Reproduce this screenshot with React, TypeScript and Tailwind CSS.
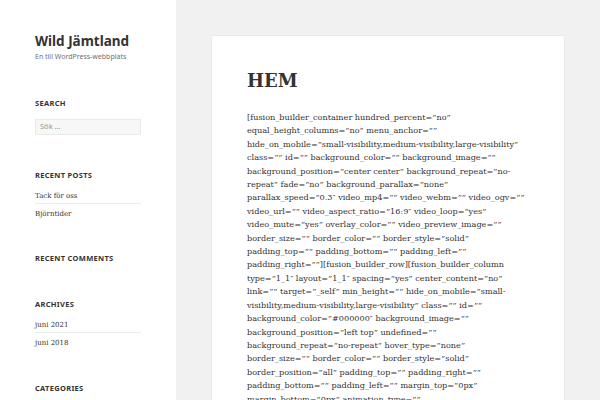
import React from "react";

const lines = [
  "[fusion_builder_container hundred_percent=”no”",
  "equal_height_columns=”no” menu_anchor=””",
  "hide_on_mobile=”small-visibility,medium-visibility,large-visibility”",
  "class=”” id=”” background_color=”” background_image=””",
  "background_position=”center center” background_repeat=”no-",
  "repeat” fade=”no” background_parallax=”none”",
  "parallax_speed=”0.3″ video_mp4=”” video_webm=”” video_ogv=””",
  "video_url=”” video_aspect_ratio=”16:9″ video_loop=”yes”",
  "video_mute=”yes” overlay_color=”” video_preview_image=””",
  "border_size=”” border_color=”” border_style=”solid”",
  "padding_top=”” padding_bottom=”” padding_left=””",
  "padding_right=””][fusion_builder_row][fusion_builder_column",
  "type=”1_1″ layout=”1_1″ spacing=”yes” center_content=”no”",
  "link=”” target=”_self” min_height=”” hide_on_mobile=”small-",
  "visibility,medium-visibility,large-visibility” class=”” id=””",
  "background_color=”#000000″ background_image=””",
  "background_position=”left top” undefined=””",
  "background_repeat=”no-repeat” hover_type=”none”",
  "border_size=”” border_color=”” border_style=”solid”",
  "border_position=”all” padding_top=”” padding_right=””",
  "padding_bottom=”” padding_left=”” margin_top=”0px”",
  "margin_bottom=”0px” animation_type=””",
];

const sans = "font-['Noto_Sans',sans-serif]";

function WidgetTitle({ children, className = "" }: { children: React.ReactNode; className?: string }) {
  return (
    <h2
      className={`font-['Noto_Sans',sans-serif] font-bold uppercase text-[7.5px] leading-[12px] tracking-[0.3px] text-[#333] ${className}`}
    >
      {children}
    </h2>
  );
}

function ListItem({ children, last = false }: { children: React.ReactNode; last?: boolean }) {
  return (
    <li
      className={`h-[18px] pt-[4px] font-['DejaVu_Serif',serif] text-[7px] leading-[13px] text-[#333] ${
        last ? "" : "border-b border-[#eaeaea]"
      }`}
    >
      {children}
    </li>
  );
}

export default function App() {
  return (
    <div className="flex h-[400px] w-[600px] overflow-hidden bg-[#f1f1f1]">
      <aside className="w-[176px] shrink-0 bg-white pl-[35px] pr-[35px] pt-[33px]">
        <h1 className={`${sans} text-[13.5px] font-bold leading-[16px] text-[#333]`}>Wild Jämtland</h1>
        <p className={`${sans} mt-[2px] text-[7px] leading-[12px] text-[#707070]`}>En till WordPress-webbplats</p>

        <WidgetTitle className="mt-[34px]">Search</WidgetTitle>
        <div className="mt-[10px] flex h-[16px] items-center border border-[#eaeaea] bg-[#f7f7f7] px-[4px]">
          <span className={`${sans} text-[7.5px] text-[#999]`}>Sök …</span>
        </div>

        <WidgetTitle className="mt-[34px]">Recent Posts</WidgetTitle>
        <ul className="mt-[5px]">
          <ListItem>Tack för oss</ListItem>
          <ListItem last>Björntider</ListItem>
        </ul>

        <WidgetTitle className="mt-[30px]">Recent Comments</WidgetTitle>

        <WidgetTitle className="mt-[34px]">Archives</WidgetTitle>
        <ul className="mt-[5px]">
          <ListItem>juni 2021</ListItem>
          <ListItem last>juni 2018</ListItem>
        </ul>

        <WidgetTitle className="mt-[31px]">Categories</WidgetTitle>
      </aside>

      <main className="flex-1 pl-[36px] pr-[36px] pt-[36px]">
        <article className="bg-white px-[35px] pt-[33px] pb-[40px] shadow-[0_0_1px_rgba(0,0,0,0.15)]">
          <h1 className="font-['DejaVu_Serif',serif] text-[18px] font-bold leading-[24px] text-[#333]">HEM</h1>
          <div className="mt-[18px] font-['DejaVu_Serif',serif] text-[8.15px] leading-[13.4px] text-[#333]">
            {lines.map((l, i) => (
              <div key={i} className="whitespace-nowrap">
                {l}
              </div>
            ))}
          </div>
        </article>
      </main>
    </div>
  );
}
